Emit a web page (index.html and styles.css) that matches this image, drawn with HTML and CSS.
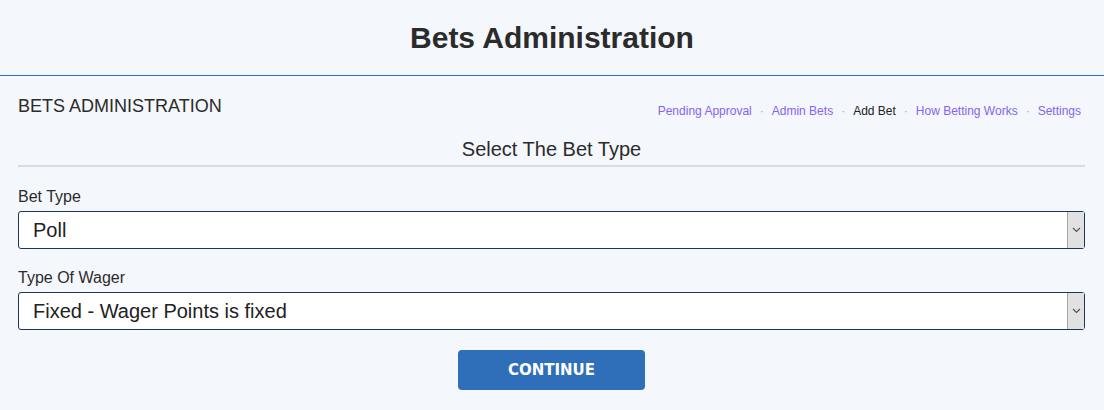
FILE: index.html
```html
<!DOCTYPE html>
<html lang="en">
<head>
<meta charset="utf-8">
<title>Bets Administration</title>
<link rel="stylesheet" href="styles.css">
</head>
<body>
<header class="page-header">
  <h1 class="page-title">Bets Administration</h1>
</header>
<main class="panel">
  <div class="panel-top">
    <h2 class="panel-title">BETS ADMINISTRATION</h2>
    <nav class="subnav">
      <a class="subnav-link" href="#">Pending Approval</a><span class="sep">·</span><a class="subnav-link" href="#">Admin Bets</a><span class="sep">·</span><span class="subnav-current">Add Bet</span><span class="sep">·</span><a class="subnav-link" href="#">How Betting Works</a><span class="sep">·</span><a class="subnav-link" href="#">Settings</a>
    </nav>
  </div>
  <h3 class="section-title">Select The Bet Type</h3>
  <form class="bet-form">
    <label class="field-label" for="betType">Bet Type</label>
    <div class="select-wrap">
      <select id="betType" class="field-select">
        <option>Poll</option>
      </select>
      <span class="select-arrow"><svg width="9" height="6" viewBox="0 0 9 6"><path d="M1 1 L4.5 4.5 L8 1" fill="none" stroke="#555" stroke-width="1.2"/></svg></span>
    </div>
    <label class="field-label" for="wagerType">Type Of Wager</label>
    <div class="select-wrap">
      <select id="wagerType" class="field-select">
        <option>Fixed - Wager Points is fixed</option>
      </select>
      <span class="select-arrow"><svg width="9" height="6" viewBox="0 0 9 6"><path d="M1 1 L4.5 4.5 L8 1" fill="none" stroke="#555" stroke-width="1.2"/></svg></span>
    </div>
    <div class="actions">
      <button type="button" class="btn-continue">CONTINUE</button>
    </div>
  </form>
</main>
</body>
</html>
```

FILE: styles.css
```css
html, body {
  margin: 0;
  padding: 0;
  background: #f4f7fc;
  font-family: "Liberation Sans", Arial, sans-serif;
  color: #333;
}

.page-header {
  height: 75px;
  border-bottom: 1px solid #2f6db4;
  display: flex;
  align-items: center;
  justify-content: center;
}

.page-title {
  margin: 0;
  font-size: 30px;
  line-height: 34px;
  font-weight: bold;
  color: #2b2b2b;
  padding-top: 1px;
}

.panel {
  padding: 20px 19px 0 18px;
}

.panel-top {
  display: flex;
  justify-content: space-between;
  align-items: baseline;
}

.panel-title {
  margin: 0;
  font-size: 18px;
  line-height: 21px;
  font-weight: normal;
  color: #2b2b2b;
}

.subnav {
  font-size: 12px;
  line-height: 14px;
  padding-right: 4px;
  position: relative;
  top: 3px;
}

.subnav-link {
  color: #8763f0;
  text-decoration: none;
}

.subnav-current {
  color: #222;
}

.sep {
  color: #b0b0b0;
  margin: 0 8px;
}

.section-title {
  margin: 20px 0 0;
  font-size: 20px;
  line-height: 24px;
  font-weight: normal;
  text-align: center;
  color: #2b2b2b;
  padding-bottom: 4px;
  border-bottom: 2px solid #d9dde2;
}

.bet-form {
  display: flex;
  flex-direction: column;
}

.field-label {
  display: block;
  margin-top: 21px;
  font-size: 16px;
  line-height: 18px;
  color: #2b2b2b;
}

.select-wrap + .field-label {
  margin-top: 20px;
}

.select-wrap {
  position: relative;
  margin-top: 5px;
}

.field-select {
  display: block;
  width: 100%;
  height: 38px;
  box-sizing: border-box;
  -webkit-appearance: none;
  appearance: none;
  background: #fff;
  border: 1px solid #1d3556;
  border-radius: 3px;
  padding: 0 24px 0 14px;
  font-family: "Liberation Sans", Arial, sans-serif;
  font-size: 20px;
  color: #222;
  outline: none;
}

.select-arrow {
  position: absolute;
  top: 1px;
  right: 1px;
  bottom: 1px;
  width: 16px;
  background: #e1e1e1;
  border-left: 1px solid #a6a6a6;
  display: flex;
  align-items: center;
  justify-content: center;
  pointer-events: none;
}

.actions {
  display: flex;
  justify-content: center;
  margin-top: 20px;
}

.btn-continue {
  width: 187px;
  height: 40px;
  border: none;
  border-radius: 4px;
  background: #2f6fba;
  color: #fff;
  font-family: "DejaVu Sans", Verdana, sans-serif;
  font-weight: bold;
  font-size: 15px;
  cursor: pointer;
}
```
